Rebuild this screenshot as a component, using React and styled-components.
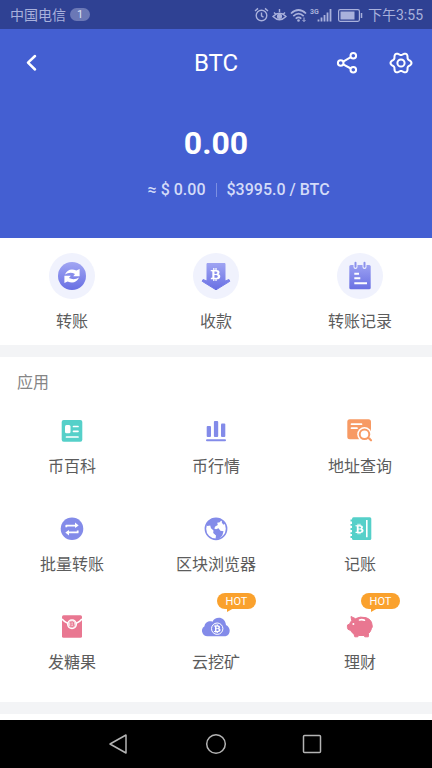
import React from "react";
import styled, { createGlobalStyle } from "styled-components";
import { FaBtc } from "react-icons/fa";

const GlobalStyle = createGlobalStyle`
  * { box-sizing: border-box; }
  body {
    margin: 0;
    background: #fff;
    font-family: Roboto, "Noto Sans CJK SC", sans-serif;
  }
  button {
    margin: 0;
    padding: 0;
    border: 0;
    background: none;
    color: inherit;
    font: inherit;
    cursor: pointer;
  }
  svg { display: block; flex: none; }
`;

const Screen = styled.div`
  min-height: 100vh;
  display: flex;
  flex-direction: column;
`;

const StatusBar = styled.div`
  height: 29px;
  padding: 0 9px 0 10px;
  display: flex;
  align-items: center;
  justify-content: space-between;
  background: #2f4193;
  color: #a9b1dc;
  font-size: 14px;
  line-height: 20px;
`;

const StatusGroup = styled.div`
  display: flex;
  align-items: center;
  gap: 4px;
`;

const CountBadge = styled.span`
  width: 20px;
  height: 13px;
  border-radius: 7px;
  background: #6b78b6;
  color: #dde1f4;
  font-size: 11px;
  line-height: 13px;
  text-align: center;
`;

const Wallet = styled.header`
  padding-bottom: 36px;
  background: #445fd2;
  color: #fff;
`;

const TopBar = styled.div`
  height: 68px;
  padding: 0 17px;
  display: grid;
  grid-template-columns: 1fr auto 1fr;
  align-items: center;
`;

const Title = styled.h1`
  margin: 0;
  font-size: 24px;
  font-weight: 400;
  line-height: 32px;
`;

const IconButton = styled.button`
  width: 28px;
  height: 28px;
`;

const TopActions = styled.div`
  display: flex;
  justify-content: flex-end;
  gap: 26px;
`;

const Balance = styled.div`
  margin-top: 26px;
  font-size: 32px;
  font-weight: 700;
  line-height: 40px;
  text-align: center;
`;

const Quote = styled.div`
  margin-top: 15px;
  display: grid;
  grid-template-columns: 1fr 1px 1fr;
  align-items: center;
  column-gap: 10px;
  color: #d3dbf8;
  font-size: 16px;
  font-weight: 500;
  line-height: 24px;
`;

const Fiat = styled.span`
  text-align: right;
`;

const Divider = styled.span`
  height: 14px;
  background: #7c8fe2;
`;

const Actions = styled.nav`
  padding: 15px 0 11px;
  display: grid;
  grid-template-columns: repeat(3, 1fr);
`;

const Tile = styled.button`
  display: flex;
  flex-direction: column;
  align-items: center;
  gap: ${(p) => (p.$large ? 11 : 10)}px;
  color: #5c5c5c;
  font-size: 16px;
  line-height: 24px;
`;

const Gap = styled.div`
  height: 12px;
  background: #f3f4f6;
`;

const Apps = styled.section`
  padding: 14px 0 27px;
`;

const SectionTitle = styled.h2`
  margin: 0 0 22px;
  padding: 0 17px;
  color: #858585;
  font-size: 16px;
  font-weight: 400;
  line-height: 24px;
`;

const AppGrid = styled.div`
  display: grid;
  grid-template-columns: repeat(3, 1fr);
  row-gap: 36px;
`;

const IconBox = styled.span`
  position: relative;
`;

const Hot = styled.span`
  position: absolute;
  left: 15px;
  bottom: 32px;
  width: 39px;
  height: 16px;
  border-radius: 8px;
  background: #faa12d;
  color: #fff;
  font-size: 11px;
  line-height: 17px;
  text-align: center;

  &::after {
    content: "";
    position: absolute;
    left: 10px;
    top: 15px;
    border-top: 4px solid #faa12d;
    border-right: 7px solid transparent;
  }
`;

const Rest = styled.div`
  flex: 1;
`;

const SystemNav = styled.nav`
  height: 48px;
  padding: 0 calc(100% / 6);
  display: grid;
  grid-template-columns: repeat(3, 1fr);
  align-items: center;
  justify-items: center;
  background: #000;
`;

const BLUE = "#838be9";
const TEAL = "#55d0c9";
const PINK = "#e97791";
const ORANGE = "#f79a64";

function Icon({ size = 28, children }) {
  return (
    <svg width={size} height={size} viewBox={`0 0 ${size} ${size}`} fill="none" aria-hidden="true">
      {children}
    </svg>
  );
}

function ActionIcon({ id, children }) {
  return (
    <Icon size={46}>
      <defs>
        <linearGradient id={id} x1="0" y1="9" x2="0" y2="37" gradientUnits="userSpaceOnUse">
          <stop stopColor="#a1a6f3" />
          <stop offset="1" stopColor="#686fe3" />
        </linearGradient>
      </defs>
      <circle cx="23" cy="23" r="23" fill="#f0f2fd" />
      {children}
    </Icon>
  );
}

const gearPath =
  Array.from({ length: 72 }, (_, i) => {
    const a = (i * Math.PI) / 36;
    const r = 9.2 + 1.3 * Math.cos(6 * a);
    return `${i ? "L" : "M"}${(14 + r * Math.cos(a)).toFixed(2)} ${(14 + r * Math.sin(a)).toFixed(2)}`;
  }).join("") + "Z";

const BackIcon = () => (
  <Icon>
    <path d="M18 7 11 13.7 18 20.5" stroke="#fff" strokeWidth="2.5" strokeLinecap="round" strokeLinejoin="round" />
  </Icon>
);

const ShareIcon = () => (
  <Icon>
    <g stroke="#fff" strokeWidth="2">
      <circle cx="7.7" cy="14" r="2.8" />
      <circle cx="20.3" cy="6.7" r="2.8" />
      <circle cx="20.3" cy="20.8" r="2.8" />
      <path d="M10.2 12.6 17.8 8.2M10.2 15.3l7.6 4.2" />
    </g>
  </Icon>
);

const GearIcon = () => (
  <Icon>
    <path d={gearPath} stroke="#fff" strokeWidth="2" strokeLinejoin="round" />
    <circle cx="14" cy="14" r="3.6" stroke="#fff" strokeWidth="2" />
  </Icon>
);

const StatusIcons = () => (
  <svg width="110" height="18" viewBox="0 0 110 18" fill="none" stroke="#a9b1dc" strokeWidth="1.4" role="img" aria-label="3G">
    <circle cx="7.5" cy="9.5" r="5.3" />
    <path d="M7.5 6.5v3.3l2 1.5M1 5l3-2.6M14 5l-3-2.6" />
    <path d="M19 10.5Q25.5 4 32 10.5Q25.5 17 19 10.5ZM20 6.5l1.5 1.5M25.5 3v3M31 6.5l-1.5 1.5" />
    <circle cx="25.5" cy="10.3" r="1.9" fill="#a9b1dc" />
    <path d="M37 7.5Q44.5 .5 52 7.5M39.3 10.1Q44.5 5.3 49.7 10.1M41.7 12.6Q44.5 10.2 47.3 12.6" strokeWidth="1.7" />
    <circle cx="44.5" cy="14.5" r="1.3" fill="#a9b1dc" stroke="none" />
    <path d="M50 11.5v4M48.5 14l1.5 1.5 1.5-1.5" strokeWidth="1" />
    <text x="56" y="7.5" fill="#a9b1dc" stroke="none" fontSize="7" fontWeight="700">3G</text>
    <path d="M64.5 15.5v-2M67.5 15.5v-4M70.5 15.5v-6.5M73.5 15.5v-9M76.5 15.5v-12.5" strokeWidth="1.8" />
    <rect x="84.6" y="3.7" width="20.800" height="11.6" rx="1.5" strokeWidth="1.2" />
    <rect x="86.5" y="5.5" width="14" height="8" fill="#a9b1dc" stroke="none" />
    <path d="M107.500 7v5" strokeWidth="1.5" />
  </svg>
);

const swirl = "M15.9 21.6Q19.800 14.200 27.400 17.600L30.600 16V23.300H24.200L26 20.900Q20.800 18.400 15.9 21.6Z";

const TransferIcon = () => (
  <ActionIcon id="transferFill">
    <circle cx="23" cy="23" r="14" fill="url(#transferFill)" />
    <g fill="#fff">
      <path d={swirl} />
      <path d={swirl} transform="rotate(180 23 23)" />
    </g>
  </ActionIcon>
);

const ReceiveIcon = () => (
  <ActionIcon id="receiveFill">
    <path d="M14 10.5H32V28L36 26.5 36.8 28.3 23 36.8 9.2 28.3 10 26.5 14 28Z" fill="url(#receiveFill)" stroke="url(#receiveFill)" strokeLinejoin="round" />
    <FaBtc x="16" y="15" size={13} color="#fff" />
  </ActionIcon>
);

const RecordIcon = () => (
  <ActionIcon id="recordFill">
    <rect x="12.3" y="12" width="21.4" height="24.3" rx="1.5" fill="url(#recordFill)" />
    <path d="M18.5 11v3M27.5 11v3" stroke="#f0f2fd" strokeWidth="4" strokeLinecap="round" />
    <path d="M18.5 9.8v4M27.5 9.8v4" stroke="#8c92ec" strokeWidth="2" strokeLinecap="round" />
    <path d="M17.3 20.7H22M17.3 25.3H23.3M17.3 30.3H30" stroke="#fff" strokeWidth="2" />
  </ActionIcon>
);

const WikiIcon = () => (
  <Icon>
    <rect x="3.7" y="3" width="20.6" height="21.7" rx="2" fill={TEAL} />
    <rect x="7" y="8" width="5.5" height="8.3" rx="1.5" fill="#fff" />
    <path d="M15.500 9.5h4.500M15.500 14.3h4.500M8.500 20h11.500" stroke="#fff" strokeWidth="1.7" strokeLinecap="round" />
  </Icon>
);

const MarketIcon = () => (
  <Icon>
    <g fill={BLUE}>
      <rect x="4.7" y="9" width="4.3" height="11" rx="1" />
      <rect x="11.9" y="4" width="4.3" height="16" rx="1" />
      <rect x="19" y="6.5" width="4.3" height="13.5" rx="1" />
      <rect x="4" y="22.3" width="20" height="2" rx="1" />
    </g>
  </Icon>
);

const AddressIcon = () => (
  <Icon>
    <rect x="1.3" y="2.3" width="23.7" height="20" rx="2.5" fill={ORANGE} />
    <path d="M5.5 7.2H15.5M5.5 11.2H11" stroke="#fff" strokeWidth="1.7" strokeLinecap="round" />
    <circle cx="18.5" cy="17.3" r="7.3" fill="#fff" />
    <circle cx="18.5" cy="17.3" r="4.8" stroke={ORANGE} strokeWidth="2" />
    <path d="M22.3 20.8 25 23.3" stroke={ORANGE} strokeWidth="2.2" strokeLinecap="round" />
  </Icon>
);

const BatchIcon = () => (
  <Icon>
    <circle cx="14" cy="13.8" r="11.3" fill={BLUE} />
    <path d="M8.3 12.3V10.6H18.5M19.7 15.5V17.4H9.5" stroke="#fff" strokeWidth="1.8" strokeLinejoin="round" />
    <path d="M17 7.6 20.7 10.6 17 13ZM11 20.4 7.3 17.4 11 15Z" fill="#fff" />
  </Icon>
);

const GlobeIcon = () => (
  <Icon>
    <circle cx="14" cy="13.8" r="10.6" fill="#fff" stroke={BLUE} strokeWidth="1.6" />
    <path
      d="M4 10Q6.5 5 11 3.6L17 3.5 19.5 5 17.8 7.2 15.2 7.8 15.8 9.9 13.2 11.5 12.3 13.6 14 14.2 16.5 13.2 18.4 15.8 21.5 16.3 20.3 20.5 17 23.8 13.5 24 14 20.5 11.2 18 11.5 15.5 9 13.3 8.2 10.5 5.5 10.9Z"
      fill={BLUE}
    />
    <path d="M20 4.8 23 8.5 21.3 9.8 19.8 7.5Z" fill={BLUE} />
  </Icon>
);

const LedgerIcon = () => (
  <Icon>
    <path d="M4.5 5.5h3M4.5 9.8h3M4.5 14h3M4.5 18.2h3M4.5 22h3" stroke={TEAL} strokeWidth="1.8" />
    <rect x="6" y="2.3" width="19.3" height="22.7" rx="1.5" fill={TEAL} />
    <FaBtc x="8" y="8.5" size={11} color="#fff" />
    <path d="M20.8 5V22.3" stroke="#fff" strokeWidth="1.6" />
  </Icon>
);

const CandyIcon = () => (
  <Icon>
    <rect x="4" y="2.3" width="20" height="22.4" rx="1.5" fill={PINK} />
    <path d="M4 6Q8 10.5 14 11.5 20 10.5 24 6" stroke="#fff" strokeWidth="1.7" />
    <circle cx="14" cy="11.2" r="5" fill="#fff" />
    <circle cx="14" cy="11.2" r="3.8" fill="#f7d5dc" />
    <FaBtc x="10.5" y="7.7" size={7} color={PINK} />
  </Icon>
);

const CloudIcon = () => (
  <Icon>
    <path d="M5.5 23.3A5.5 5.5 0 0 1 2.5 13.2C3 9 7.5 7.5 10.5 8.8 12.5 3.5 23 2.5 24 12 29 14 29 22.3 23.5 23.3Z" fill={BLUE} />
    <circle cx="15.2" cy="15.7" r="5.7" stroke="#fff" strokeWidth="1" />
    <FaBtc x="10.7" y="11.2" size={9} color="#fff" />
  </Icon>
);

const PiggyIcon = () => (
  <Icon>
    <path
      d="M5 3.500 9.500 5.700Q14 3 20 4.700 25.500 6.500 26 11.500 26.900 14 25.500 15.500 24.500 19 22.500 20.5L22.3 23.800H18.8L18 22.500H12.5L11.8 23.800H8.8L8 21Q5.5 19.500 4.7 17.5L2 16.3Q1 14.5 1.5 12L3.7 11Q4.3 9 5.700 7.7Z"
      fill={PINK}
      stroke={PINK}
      strokeWidth="1"
      strokeLinejoin="round"
    />
    <path d="M13.500 7Q16 6.200 18.500 7.200" stroke="#fff" strokeWidth="1.6" strokeLinecap="round" />
    <circle cx="7.4" cy="11" r="1" fill="#fff" />
  </Icon>
);

const actions = [
  ["转账", TransferIcon],
  ["收款", ReceiveIcon],
  ["转账记录", RecordIcon],
];

const apps = [
  ["币百科", WikiIcon],
  ["币行情", MarketIcon],
  ["地址查询", AddressIcon],
  ["批量转账", BatchIcon],
  ["区块浏览器", GlobeIcon],
  ["记账", LedgerIcon],
  ["发糖果", CandyIcon],
  ["云挖矿", CloudIcon, true],
  ["理财", PiggyIcon, true],
];

export default function App() {
  return (
    <Screen>
      <GlobalStyle />
      <StatusBar>
        <StatusGroup>
          <span>中国电信</span>
          <CountBadge>1</CountBadge>
        </StatusGroup>
        <StatusGroup>
          <StatusIcons />
          <span>下午3:55</span>
        </StatusGroup>
      </StatusBar>

      <Wallet>
        <TopBar>
          <IconButton aria-label="返回"><BackIcon /></IconButton>
          <Title>BTC</Title>
          <TopActions>
            <IconButton aria-label="分享"><ShareIcon /></IconButton>
            <IconButton aria-label="设置"><GearIcon /></IconButton>
          </TopActions>
        </TopBar>
        <Balance>0.00</Balance>
        <Quote>
          <Fiat>≈ $ 0.00</Fiat>
          <Divider />
          <span>$3995.0 / BTC</span>
        </Quote>
      </Wallet>

      <Actions>
        {actions.map(([label, Glyph]) => (
          <Tile key={label} $large>
            <Glyph />
            <span>{label}</span>
          </Tile>
        ))}
      </Actions>
      <Gap />

      <Apps>
        <SectionTitle>应用</SectionTitle>
        <AppGrid>
          {apps.map(([label, Glyph, hot]) => (
            <Tile key={label}>
              <IconBox>
                <Glyph />
                {hot && <Hot>HOT</Hot>}
              </IconBox>
              <span>{label}</span>
            </Tile>
          ))}
        </AppGrid>
      </Apps>
      <Gap />
      <Rest />

      <SystemNav>
        <IconButton aria-label="后退">
          <Icon>
            <path d="M20 5V23L4 14Z" stroke="#b4b4b4" strokeWidth="1.5" strokeLinejoin="round" />
          </Icon>
        </IconButton>
        <IconButton aria-label="主页">
          <Icon>
            <circle cx="14" cy="14" r="9.3" stroke="#b4b4b4" strokeWidth="1.5" />
          </Icon>
        </IconButton>
        <IconButton aria-label="最近任务">
          <Icon>
            <rect x="5.5" y="5.5" width="17" height="17" rx="1" stroke="#b4b4b4" strokeWidth="1.5" />
          </Icon>
        </IconButton>
      </SystemNav>
    </Screen>
  );
}
